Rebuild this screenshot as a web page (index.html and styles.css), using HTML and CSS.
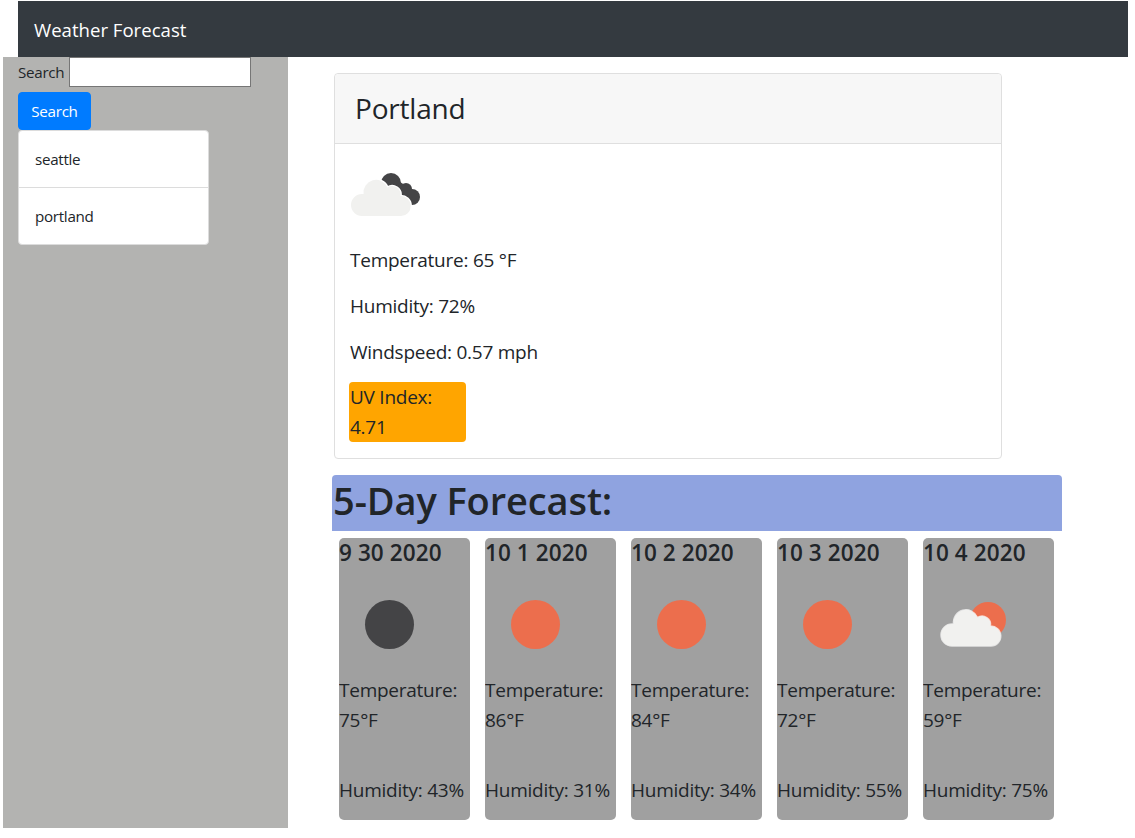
FILE: index.html
```html
<!DOCTYPE html>
<html lang="en">
<head>
<meta charset="utf-8">
<title>Weather Forecast</title>
<link rel="stylesheet" href="styles.css">
</head>
<body>
<svg class="defs" width="0" height="0" aria-hidden="true">
  <defs>
    <path id="cloud" d="M11 37A11 11 0 0 1 11 15H12.600A12.500 12.500 0 0 1 36.500 8.500A8.500 8.500 0 0 1 49.500 17A10 10 0 0 1 50 37Z"/>
  </defs>
</svg>
<header class="navbar"><span class="brand">Weather Forecast</span></header>
<div class="layout">
  <aside class="sidebar">
    <form class="search">
      <label class="search-label" for="city">Search</label>
      <input class="search-input" id="city" type="text">
      <button class="search-btn" type="button">Search</button>
    </form>
    <ul class="history">
      <li class="history-item">seattle</li>
      <li class="history-item">portland</li>
    </ul>
  </aside>
  <main class="main">
    <section class="card">
      <h3 class="card-header">Portland</h3>
      <div class="card-body">
        <svg class="current-icon" viewBox="0 0 72 44" width="72" height="44" aria-hidden="true">
          <g fill="#444446">
            <circle cx="41" cy="11" r="10"/><circle cx="56" cy="17" r="6"/><circle cx="62" cy="25" r="8"/>
            <path d="M33 8L50 10L66 20L58 33L40 30Z"/>
          </g>
          <g transform="translate(1 7)"><use href="#cloud" fill="#fff" stroke="#fff" stroke-width="2.500"/><use href="#cloud" fill="#f1f1ef"/></g>
        </svg>
        <p class="stat">Temperature: 65 °F</p>
        <p class="stat">Humidity: 72%</p>
        <p class="stat">Windspeed: 0.57 mph</p>
        <p class="uv">UV Index: 4.71</p>
      </div>
    </section>
    <h2 class="forecast-title">5-Day Forecast:</h2>
    <div class="forecast">
      <article class="day">
        <h4 class="day-date">9 30 2020</h4>
        <svg class="day-icon" viewBox="0 0 100 70" width="100" height="70" aria-hidden="true"><circle cx="49.500" cy="34.500" r="24.500" fill="#444446"/></svg>
        <p class="day-line">Temperature: 75°F</p>
        <p class="day-line">Humidity: 43%</p>
      </article>
      <article class="day">
        <h4 class="day-date">10 1 2020</h4>
        <svg class="day-icon" viewBox="0 0 100 70" width="100" height="70" aria-hidden="true"><circle cx="49.500" cy="34.500" r="24.500" fill="#ec6e4d"/></svg>
        <p class="day-line">Temperature: 86°F</p>
        <p class="day-line">Humidity: 31%</p>
      </article>
      <article class="day">
        <h4 class="day-date">10 2 2020</h4>
        <svg class="day-icon" viewBox="0 0 100 70" width="100" height="70" aria-hidden="true"><circle cx="49.500" cy="34.500" r="24.500" fill="#ec6e4d"/></svg>
        <p class="day-line">Temperature: 84°F</p>
        <p class="day-line">Humidity: 34%</p>
      </article>
      <article class="day">
        <h4 class="day-date">10 3 2020</h4>
        <svg class="day-icon" viewBox="0 0 100 70" width="100" height="70" aria-hidden="true"><circle cx="49.500" cy="34.500" r="24.500" fill="#ec6e4d"/></svg>
        <p class="day-line">Temperature: 72°F</p>
        <p class="day-line">Humidity: 55%</p>
      </article>
      <article class="day">
        <h4 class="day-date">10 4 2020</h4>
        <svg class="day-icon" viewBox="0 0 100 70" width="100" height="70" aria-hidden="true">
          <circle cx="64" cy="30" r="18" fill="#ec6e4d"/>
          <g transform="translate(17 19)"><use href="#cloud" fill="#fff" stroke="#fff" stroke-width="1.500" opacity="0.7"/><use href="#cloud" fill="#f1f1ef"/></g>
        </svg>
        <p class="day-line">Temperature: 59°F</p>
        <p class="day-line">Humidity: 75%</p>
      </article>
    </div>
  </main>
</div>
</body>
</html>
```
FILE: styles.css
```css
* { box-sizing: border-box; }
html, body { margin: 0; padding: 0; background: #fff; }
body {
  padding-top: 1px;
  width: 1128px;
  height: 838px;
  overflow: hidden;
  font-family: "Open Sans", "Noto Sans", sans-serif;
  color: #212529;
  font-size: 16px;
  line-height: 1.5;
}
.defs { position: absolute; }
.navbar {
  margin-left: 18px;
  height: 56px;
  background: #343a40;
  padding: 14px 16px 0;
}
.brand { color: #fff; font-size: 18.600px; line-height: 29px; display: block; }
.layout { display: flex; align-items: flex-start; }
.sidebar {
  margin-left: 3px;
  width: 285px;
  height: 771px;
  background: #b3b3b1;
  padding-left: 15px;
}
.search { display: block; }
.search-label {
  display: inline-block;
  vertical-align: top;
  font-size: 15.200px;
  line-height: 30px;
  letter-spacing: -0.300px;
  margin-right: 1px;
}
.search-input {
  width: 182px;
  height: 30px;
  padding: 1px 2px;
  border: 1px solid #767676;
  background: #fff;
  vertical-align: top;
  border-radius: 0;
}
.search-btn {
  display: block;
  margin-top: 5px;
  width: 73px;
  height: 38px;
  border: 1px solid #007bff;
  border-radius: 4px;
  background: #007bff;
  color: #fff;
  font: inherit;
  font-size: 15.200px;
  letter-spacing: -0.300px;
  padding: 0;
}
.history {
  list-style: none;
  margin: 0;
  padding: 0;
  width: 191px;
  background: #fff;
  border: 1px solid #dcdcdc;
  border-radius: 4px;
}
.history-item {
  height: 56px;
  padding: 17px 16px 0;
  font-size: 15.200px;
  letter-spacing: -0.300px;
}
.history-item + .history-item { border-top: 1px solid #dcdcdc; height: 57px; }
.main { flex: none; width: 840px; padding: 16px 0 0 44px; }
.card {
  width: 668px;
  height: 386px;
  margin-left: 2px;
  border: 1px solid #dfdfdf;
  border-radius: 4px;
  background: #fff;
}
.card-header {
  margin: 0;
  height: 70px;
  padding: 14px 20px 0;
  font-size: 28px;
  line-height: 41px;
  font-weight: 400;
  background: #f7f7f7;
  border-bottom: 1px solid #dfdfdf;
  border-radius: 4px 4px 0 0;
  letter-spacing: -0.200px;
}
.card-body { padding: 28px 15px 0; }
.current-icon { display: block; margin-bottom: 29px; }
.stat {
  margin: 0 0 16px;
  font-size: 19px;
  line-height: 30px;
  letter-spacing: -0.250px;
}
.uv {
  margin: -1px 0 0 -1px;
  width: 117px;
  height: 60px;
  padding-left: 1px;
  background: #ffa500;
  border-radius: 4px;
  font-size: 19px;
  line-height: 30px;
  letter-spacing: -0.250px;
}
.forecast-title {
  margin: 16px 0 0;
  width: 730px;
  height: 56px;
  background: #8fa3e0;
  border-radius: 4px 4px 0 0;
  font-size: 38px;
  line-height: 50px;
  font-weight: 600;
  letter-spacing: -0.100px;
  padding-left: 1px;
}
.forecast { display: flex; gap: 15px; margin: 7px 0 0 7px; }
.day {
  flex: none;
  width: 131px;
  height: 282px;
  background: #a0a0a0;
  border-radius: 5px;
  overflow: hidden;
}
.day-date {
  margin: 0;
  height: 31px;
  font-size: 22.500px;
  line-height: 30px;
  font-weight: 600;
  letter-spacing: 0.100px;
  white-space: nowrap;
}
.day-icon { display: block; margin: 21px 0 15px 1px; }
.day-line {
  margin: 0 0 40px;
  font-size: 19px;
  line-height: 30px;
  letter-spacing: -0.250px;
  width: 131px;
}
.day-line + .day-line { white-space: nowrap; margin: 0; }
```
